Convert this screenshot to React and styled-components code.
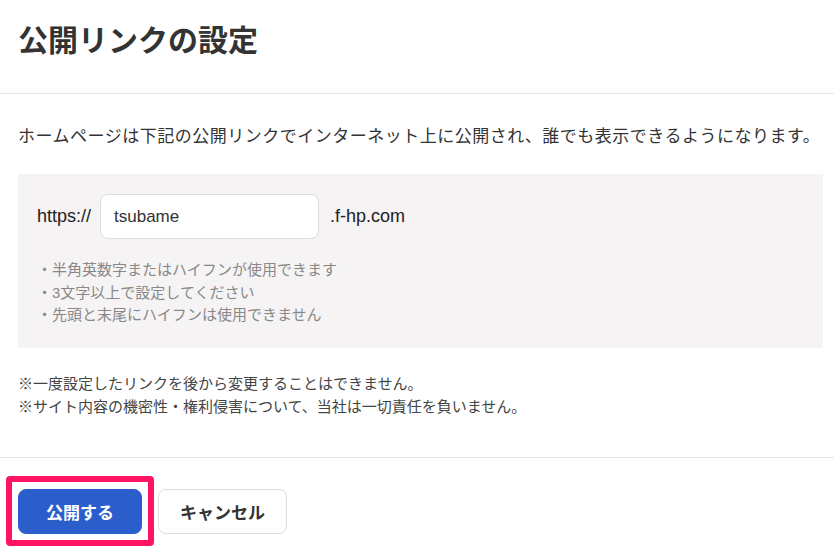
import React from 'react';
import styled, { createGlobalStyle } from 'styled-components';

const colors = {
  text: '#333333',
  subText: '#888888',
  line: '#e6e6e6',
  panel: '#f5f3f4',
  border: '#dddddd',
  primary: '#2b5ecb',
  highlight: '#ff1461',
  white: '#ffffff',
};

const GlobalStyle = createGlobalStyle`
  body {
    margin: 0;
    background: ${colors.white};
    font-family: 'Liberation Sans', 'Noto Sans CJK JP', sans-serif;
    color: ${colors.text};
  }
`;

const Page = styled.div`
  width: 834px;
`;

const Header = styled.header`
  padding: 18px 18px 30px;
  border-bottom: 1px solid ${colors.line};
`;

const Title = styled.h1`
  margin: 0;
  font-size: 30px;
  line-height: 45px;
  font-weight: 700;
  color: ${colors.text};
`;

const Body = styled.section`
  padding: 30px 11px 39px 18px;
  border-bottom: 1px solid ${colors.line};
`;

const Lead = styled.p`
  margin: 0 0 25px;
  font-size: 17px;
  line-height: 25px;
  letter-spacing: 0.5px;
  white-space: nowrap;
`;

const Panel = styled.div`
  background: ${colors.panel};
  padding: 20px 19px 21px;
`;

const UrlRow = styled.div`
  display: flex;
  align-items: center;
  gap: 9px;
  font-size: 18px;
  color: #222222;
`;

const SlugInput = styled.input`
  width: 219px;
  height: 45px;
  box-sizing: border-box;
  padding: 0 13px;
  border: 1px solid ${colors.border};
  border-radius: 8px;
  background: ${colors.white};
  font-family: inherit;
  font-size: 17px;
  color: ${colors.text};
  outline: none;
  margin-right: 2px;
`;

const Rules = styled.ul`
  list-style: none;
  margin: 20px 0 0;
  padding: 0;
  font-size: 15px;
  line-height: 22.5px;
  color: ${colors.subText};
`;

const Notes = styled.div`
  margin-top: 24px;
  font-size: 15px;
  line-height: 23px;
  color: #444444;
`;

const Footer = styled.footer`
  display: flex;
  gap: 16px;
  padding: 31px 18px;
`;

/* pink focus frame drawn over the publish button */
const Focus = styled.span`
  position: relative;
  display: inline-flex;

  &::after {
    content: '';
    position: absolute;
    inset: -13px -12px -12px -12px;
    border: 6px solid ${colors.highlight};
    border-radius: 4px;
    pointer-events: none;
  }
`;

const Button = styled.button`
  height: 45px;
  box-sizing: border-box;
  padding: 0 ${p => (p.$primary ? 27 : 21)}px;
  border-radius: 8px;
  border: 1px solid ${p => (p.$primary ? colors.primary : colors.border)};
  background: ${p => (p.$primary ? colors.primary : colors.white)};
  color: ${p => (p.$primary ? colors.white : colors.text)};
  font-family: inherit;
  font-size: 17px;
  font-weight: 700;
  cursor: pointer;
`;

export default function App() {
  return (
    <Page>
      <GlobalStyle />
      <Header>
        <Title>公開リンクの設定</Title>
      </Header>
      <Body>
        <Lead>
          ホームページは下記の公開リンクでインターネット上に公開され、誰でも表示できるようになります。
        </Lead>
        <Panel>
          <UrlRow>
            <span>https://</span>
            <SlugInput defaultValue="tsubame" />
            <span>.f-hp.com</span>
          </UrlRow>
          <Rules>
            <li>・半角英数字またはハイフンが使用できます</li>
            <li>・3文字以上で設定してください</li>
            <li>・先頭と末尾にハイフンは使用できません</li>
          </Rules>
        </Panel>
        <Notes>
          <div>※一度設定したリンクを後から変更することはできません。</div>
          <div>※サイト内容の機密性・権利侵害について、当社は一切責任を負いません。</div>
        </Notes>
      </Body>
      <Footer>
        <Focus>
          <Button $primary>公開する</Button>
        </Focus>
        <Button>キャンセル</Button>
      </Footer>
    </Page>
  );
}
